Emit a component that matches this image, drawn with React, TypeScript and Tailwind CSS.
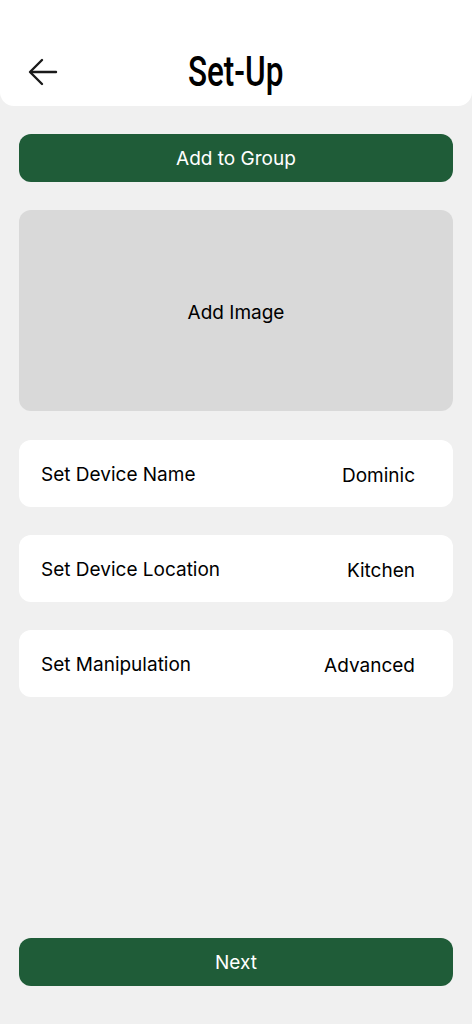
import React from "react";

function Row({ label, value }: { label: string; value: string }) {
  return (
    <div className="flex h-[67px] items-center justify-between rounded-[12px] bg-white pl-[22px] pr-[38px] pt-[3px]">
      <span className="text-[19px] text-black">{label}</span>
      <span className="mt-[2px] text-[19px] text-black">{value}</span>
    </div>
  );
}

export default function App() {
  return (
    <div
      className="flex h-[1024px] w-[472px] flex-col bg-[#f0f0f0]"
      style={{ fontFamily: "Inter, 'Noto Sans', sans-serif" }}
    >
      <header className="relative flex h-[106px] shrink-0 items-start justify-center rounded-b-[14px] bg-white pt-[51px]">
        <button className="absolute left-[28px] top-[58px] text-[#1a1a1a]">
          <svg width="30" height="28" viewBox="0 0 30 28" fill="none" stroke="currentColor" strokeWidth="2.4" strokeLinecap="round" strokeLinejoin="round">
            <path d="M28 14H3" />
            <path d="M14 2L2 14l12 12" />
          </svg>
        </button>
        <h1
          className="text-[42px] font-medium leading-[42px] text-black"
          style={{ fontFamily: "Roboto, 'Liberation Sans', sans-serif" }}
        >
          <span className="inline-block origin-center scale-x-[0.75]">Set-Up</span>
        </h1>
      </header>

      <main className="flex flex-1 flex-col px-[19px] pb-[38px] pt-[28px]">
        <button className="h-[48px] w-full rounded-[12px] bg-[#1f5c38] pt-[2px] text-[19px] text-white">
          Add to Group
        </button>

        <div className="mt-[28px] flex h-[201px] items-center justify-center rounded-[12px] bg-[#d9d9d9] pt-[5px] text-[19px] text-black">
          Add Image
        </div>

        <div className="mt-[29px] flex flex-col gap-[28px]">
          <Row label="Set Device Name" value="Dominic" />
          <Row label="Set Device Location" value="Kitchen" />
          <Row label="Set Manipulation" value="Advanced" />
        </div>

        <div className="flex-1" />

        <button className="h-[48px] w-full rounded-[12px] bg-[#1f5c38] pt-[2px] text-[19px] text-white">
          Next
        </button>
      </main>
    </div>
  );
}
